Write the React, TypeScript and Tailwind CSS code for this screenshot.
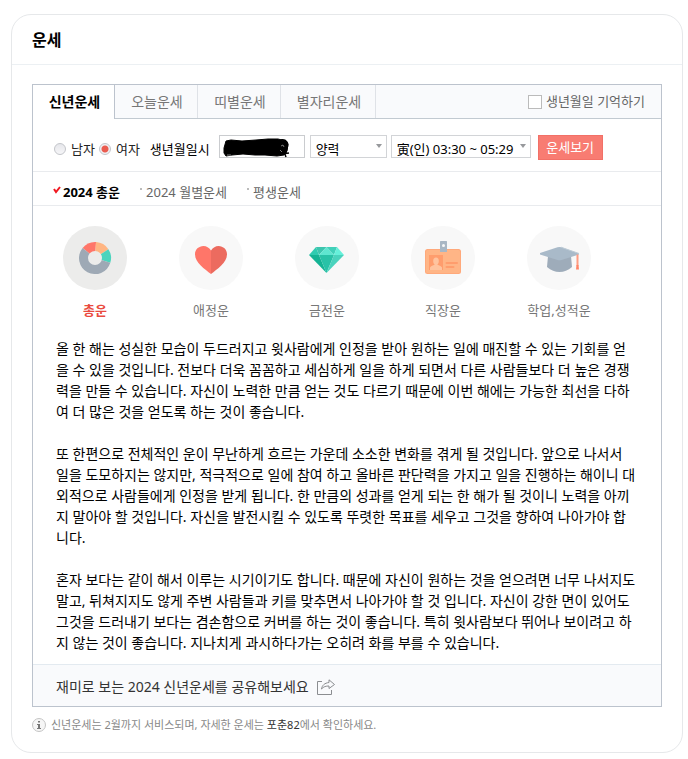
import { useState, type ReactNode } from "react";

const TABS = [
  { label: "신년운세", width: "w-[82px]" },
  { label: "오늘운세", width: "w-[83px]" },
  { label: "띠별운세", width: "w-[83px]" },
  { label: "별자리운세", width: "w-[95px]" },
];

const SUB_TABS = ["2024 총운", "2024 월별운세", "평생운세"];

const PARAGRAPHS = [
  "올 한 해는 성실한 모습이 두드러지고 윗사람에게 인정을 받아 원하는 일에 매진할 수 있는 기회를 얻을 수 있을 것입니다. 전보다 더욱 꼼꼼하고 세심하게 일을 하게 되면서 다른 사람들보다 더 높은 경쟁력을 만들 수 있습니다. 자신이 노력한 만큼 얻는 것도 다르기 때문에 이번 해에는 가능한 최선을 다하여 더 많은 것을 얻도록 하는 것이 좋습니다.",
  "또 한편으로 전체적인 운이 무난하게 흐르는 가운데 소소한 변화를 겪게 될 것입니다. 앞으로 나서서 일을 도모하지는 않지만, 적극적으로 일에 참여 하고 올바른 판단력을 가지고 일을 진행하는 해이니 대외적으로 사람들에게 인정을 받게 됩니다. 한 만큼의 성과를 얻게 되는 한 해가 될 것이니 노력을 아끼지 말아야 할 것입니다. 자신을 발전시킬 수 있도록 뚜렷한 목표를 세우고 그것을 향하여 나아가야 합니다.",
  "혼자 보다는 같이 해서 이루는 시기이기도 합니다. 때문에 자신이 원하는 것을 얻으려면 너무 나서지도 말고, 뒤쳐지지도 않게 주변 사람들과 키를 맞추면서 나아가야 할 것 입니다. 자신이 강한 면이 있어도 그것을 드러내기 보다는 겸손함으로 커버를 하는 것이 좋습니다. 특히 윗사람보다 뛰어나 보이려고 하지 않는 것이 좋습니다. 지나치게 과시하다가는 오히려 화를 부를 수 있습니다.",
];

function DonutIcon() {
  return (
    <svg viewBox="0 0 64 64" className="size-16" aria-hidden="true">
      <path d="M32 32 L19.6 22 A16 16 0 0 1 33 16Z" fill="#ff7669" />
      <path d="M32 32 L33 16 A16 16 0 0 1 45.4 23.2Z" fill="#ffb582" />
      <path d="M32 32 L45.4 23.2 A16 16 0 0 1 47.3 36.8Z" fill="#4bd4bd" />
      <path d="M32 32 L47.3 36.8 A16 16 0 1 1 19.6 22Z" fill="#9ea9b5" />
      <circle cx="32" cy="32" r="7" fill="#ececeb" />
    </svg>
  );
}

function HeartIcon() {
  return (
    <svg viewBox="0 0 64 64" className="size-16" aria-hidden="true">
      <path d="M32 24.5C30 21.5 27.500 20 24.500 20C19.700 20 16 23.600 16 28.200C16 37 26 43 32 48Z" fill="#ff7669" />
      <path d="M32 24.5C34 21.5 36.500 20 39.500 20C44.300 20 48 23.600 48 28.200C48 37 38 43 32 48Z" fill="#ec6b5f" />
    </svg>
  );
}

function DiamondIcon() {
  return (
    <svg viewBox="0 0 64 64" className="size-16" aria-hidden="true">
      <path d="M21 21L14 29H24Z" fill="#2fcbb0" />
      <path d="M21 21H31.500L24 29Z" fill="#3cc5ae" />
      <path d="M31.500 21L24 29H39Z" fill="#5fe6d0" />
      <path d="M31.500 21H42L39 29Z" fill="#41d0b9" />
      <path d="M42 21L49 29H39Z" fill="#66f0da" />
      <path d="M14 29H24L31.500 47Z" fill="#14b394" />
      <path d="M24 29H39L31.500 47Z" fill="#29c2a7" />
      <path d="M39 29H49L31.500 47Z" fill="#4ad3bd" />
    </svg>
  );
}

function BadgeIcon() {
  return (
    <svg viewBox="0 0 64 64" className="size-16" aria-hidden="true">
      <rect x="14" y="23" width="36" height="25" rx="2.500" fill="#ffa97b" />
      <rect x="15" y="24" width="34" height="23" rx="1.500" fill="#ffb586" />
      <rect x="18" y="29" width="14" height="15" fill="#ff9d6d" />
      <ellipse cx="25" cy="35" rx="2.800" ry="3.500" fill="#ffc49f" />
      <path d="M19 44V41.500C20 39.700 22 39.700 23.500 38.700V36H26.500V38.700C28 39.700 30 39.700 31 41.500V44Z" fill="#ffc49f" />
      <path d="M35.500 37H46M35.500 41H42.500" stroke="#ff9d6d" strokeWidth="2" strokeLinecap="round" />
      <rect x="29" y="15" width="7" height="11" rx="0.500" fill="#a9b7c4" />
      <circle cx="32.500" cy="19.500" r="1.500" fill="#f8f8f8" />
    </svg>
  );
}

function GraduationIcon() {
  return (
    <svg viewBox="0 0 64 64" className="size-16" aria-hidden="true">
      <path d="M21 30H44L45 41C41 44.500 37 46 32.500 46C28 46 24 44.500 20 41Z" fill="#9eacba" />
      <path d="M13 27L30.500 21.200Q32.500 20.700 34.500 21.200L52 27.500V28.500L34.500 34Q32.500 34.600 30.500 34L13 28.500Z" fill="#a9bac9" />
      <path d="M34 21.200L52 27.500" stroke="#bdcbd6" strokeWidth="1" />
      <path d="M50.500 28.500V40" stroke="#ff9c82" strokeWidth="2" />
      <path d="M49.500 39H51.500L52 43.500H49Z" fill="#ff8467" />
    </svg>
  );
}

const CATEGORIES: { label: string; icon: ReactNode }[] = [
  { label: "총운", icon: <DonutIcon /> },
  { label: "애정운", icon: <HeartIcon /> },
  { label: "금전운", icon: <DiamondIcon /> },
  { label: "직장운", icon: <BadgeIcon /> },
  { label: "학업,성적운", icon: <GraduationIcon /> },
];

function Radio({ label, checked, onSelect }: { label: string; checked: boolean; onSelect: () => void }) {
  return (
    <label className="flex items-center gap-[5px]">
      <input
        type="radio"
        name="gender"
        checked={checked}
        onChange={onSelect}
        className="size-3 shrink-0 appearance-none rounded-full border border-[#c3c5ca] bg-linear-to-b from-[#e6e7eb] to-[#f6f6f8] checked:bg-[radial-gradient(circle,#ea5c50_0_3px,#f1f1f4_4px)]"
      />
      {label}
    </label>
  );
}

function Select({ label, value, className }: { label: string; value: string; className: string }) {
  return (
    <div className={`relative ${className}`}>
      <select
        aria-label={label}
        className="block h-[23px] w-full appearance-none border border-[#d2d4d7] bg-white pt-1 pl-[5px] text-[13px] leading-[18px] text-black"
      >
        <option>{value}</option>
      </select>
      <svg viewBox="0 0 6 4" className="pointer-events-none absolute top-[9px] right-[5px] h-1 w-1.5" aria-hidden="true">
        <path d="M0 0H6L3 4Z" fill="#97999c" />
      </svg>
    </div>
  );
}

export default function App() {
  const [gender, setGender] = useState("여자");
  return (
    <main className="bg-white pt-3.5 pr-[5px] pb-1.5 pl-[11px] font-['Noto_Sans','Noto_Sans_CJK_KR',sans-serif] text-sm text-black">
      <section className="rounded-[20px] border border-[#e6e8ea] pb-[18px]">
        <h1 className="border-b border-[#ecf0f3] px-5 pt-[13px] pb-3 text-base leading-6 font-bold">운세</h1>

        <div className="mx-5 mt-[19px] border border-[#bcc3cd]">
          <div className="flex h-[34px] items-stretch border-b border-[#c2cad1] bg-[#f9fafc]">
            {TABS.map((tab, i) => (
              <button
                key={tab.label}
                type="button"
                className={`${tab.width} shrink-0 border-r pl-0.5 ${
                  i === 0
                    ? "-mb-px border-[#bcc3cd] bg-white pb-px font-bold text-black"
                    : "border-[#dfe2e7] text-[#777]"
                }`}
              >
                {tab.label}
              </button>
            ))}
            <label className="mr-4 ml-auto flex items-center gap-1 text-[13px] text-[#666]">
              <input type="checkbox" className="size-3.5 appearance-none border border-[#bbb] bg-white checked:bg-[#bbb]" />
              생년월일 기억하기
            </label>
          </div>

          <form className="flex h-[53px] items-start border-b border-[#e9ebee] pt-4 pl-[21px] text-[13px] leading-7 text-[#222]">
            <div className="flex gap-1">
              <Radio label="남자" checked={gender === "남자"} onSelect={() => setGender("남자")} />
              <Radio label="여자" checked={gender === "여자"} onSelect={() => setGender("여자")} />
            </div>
            <label htmlFor="birth" className="ml-2.5 text-black">
              생년월일시
            </label>
            <div className="relative ml-[9px] w-[86px]">
              <input id="birth" type="text" className="block h-[23px] w-full border border-[#cacccf] bg-white px-1.5" />
              <svg viewBox="0 0 86 23" className="pointer-events-none absolute inset-0 h-[23px] w-[86px]" aria-hidden="true">
                <path
                  d="M7 6L12 5L23 6L37 5L49 4L59 4L67 6L69 9L68 16L65 20L58 21L46 20L36 20L24 19L13 20L7 21L5 18L5 13Z"
                  fill="#000"
                  stroke="#000"
                  strokeLinejoin="round"
                />
                <path d="M62 5C67 4 70 8 68 13L66 20M62 19L70 18M65 17L67 22" fill="none" stroke="#000" strokeWidth="1.500" />
                <path d="M62 11L64 10L65 12M61 15L63 17M8 20H12" fill="none" stroke="#999" strokeWidth="0.800" />
              </svg>
            </div>
            <Select label="양력 음력" value="양력" className="ml-[5px] w-[77px]" />
            <Select label="태어난 시" value="寅(인) 03:30 ~ 05:29" className="ml-1 w-[140px]" />
            <button
              type="button"
              className="ml-[7px] h-[25px] w-[65px] border border-[#f27067] bg-[#f87c72] text-[13px] leading-[23px] text-white"
            >
              운세보기
            </button>
          </form>

          <nav className="flex h-[34px] items-center gap-5 border-b border-[#e9ebee] pt-1.5 pl-5">
            {SUB_TABS.map((label, i) => (
              <a key={label} href="#" className={`flex text-[13px] leading-5 ${i === 0 ? "gap-0.5 font-bold text-black" : "gap-1 text-[#666]"}`}>
                {i === 0 ? (
                  <svg viewBox="0 0 8 8" className="mt-1 size-2" aria-hidden="true">
                    <path d="M1 3L3 6L7 1" fill="none" stroke="#f01820" strokeWidth="2" />
                  </svg>
                ) : (
                  <span className="mt-1.5 size-0.5 bg-[#bbb]" />
                )}
                {label}
              </a>
            ))}
          </nav>

          <ul className="flex pt-5 pl-1">
            {CATEGORIES.map((category, i) => (
              <li key={category.label} className="w-[116px]">
                <a
                  href="#"
                  className={`flex flex-col items-center gap-2.5 text-[13px] leading-5 ${i === 0 ? "font-bold text-[#ea4b40]" : "text-[#777]"}`}
                >
                  <span className={`rounded-full ${i === 0 ? "bg-[#ececeb]" : "bg-[#f8f8f8]"}`}>{category.icon}</span>
                  {category.label}
                </a>
              </li>
            ))}
          </ul>

          <div className="space-y-[21px] pt-[18px] pr-[25px] pb-[11px] pl-[23px] leading-[21px] break-all">
            {PARAGRAPHS.map((text) => (
              <p key={text}>{text}</p>
            ))}
          </div>

          <div className="flex h-[42px] items-center border-t border-[#e3eaf0] bg-[#f9fafc] pt-0.5 pl-[23px] text-[#333]">
            재미로 보는 2024 신년운세를 공유해보세요
            <button type="button" aria-label="공유하기" className="ml-2">
              <svg viewBox="0 0 18 16" className="h-4 w-[18px]" fill="none" stroke="#8b8d90" aria-hidden="true">
                <path d="M5 2.500H0.500V15.500H14.500V11" />
                <path d="M4.500 10C5 6.500 7.500 4 12 3.500V0.800L17.500 5.500L12 9.500V7C9 7 6.500 7.500 4.500 10Z" />
              </svg>
            </button>
          </div>
        </div>

        <p className="mx-5 mt-[9px] flex items-center gap-[5px] text-[11px] leading-[18px] text-[#888]">
          <svg viewBox="0 0 14 14" className="size-3.5" aria-hidden="true">
            <circle cx="7" cy="7" r="6.500" fill="#f6f6f6" stroke="#c4c4c4" />
            <path d="M6 3H8V4.500H6ZM5 6H8V10H9V11H5V10H6V7H5Z" fill="#777" />
          </svg>
          <span>
            신년운세는 2월까지 서비스되며, 자세한 운세는{" "}
            <a href="#" className="text-[#333]">
              포춘82
            </a>
            에서 확인하세요.
          </span>
        </p>
      </section>
    </main>
  );
}
